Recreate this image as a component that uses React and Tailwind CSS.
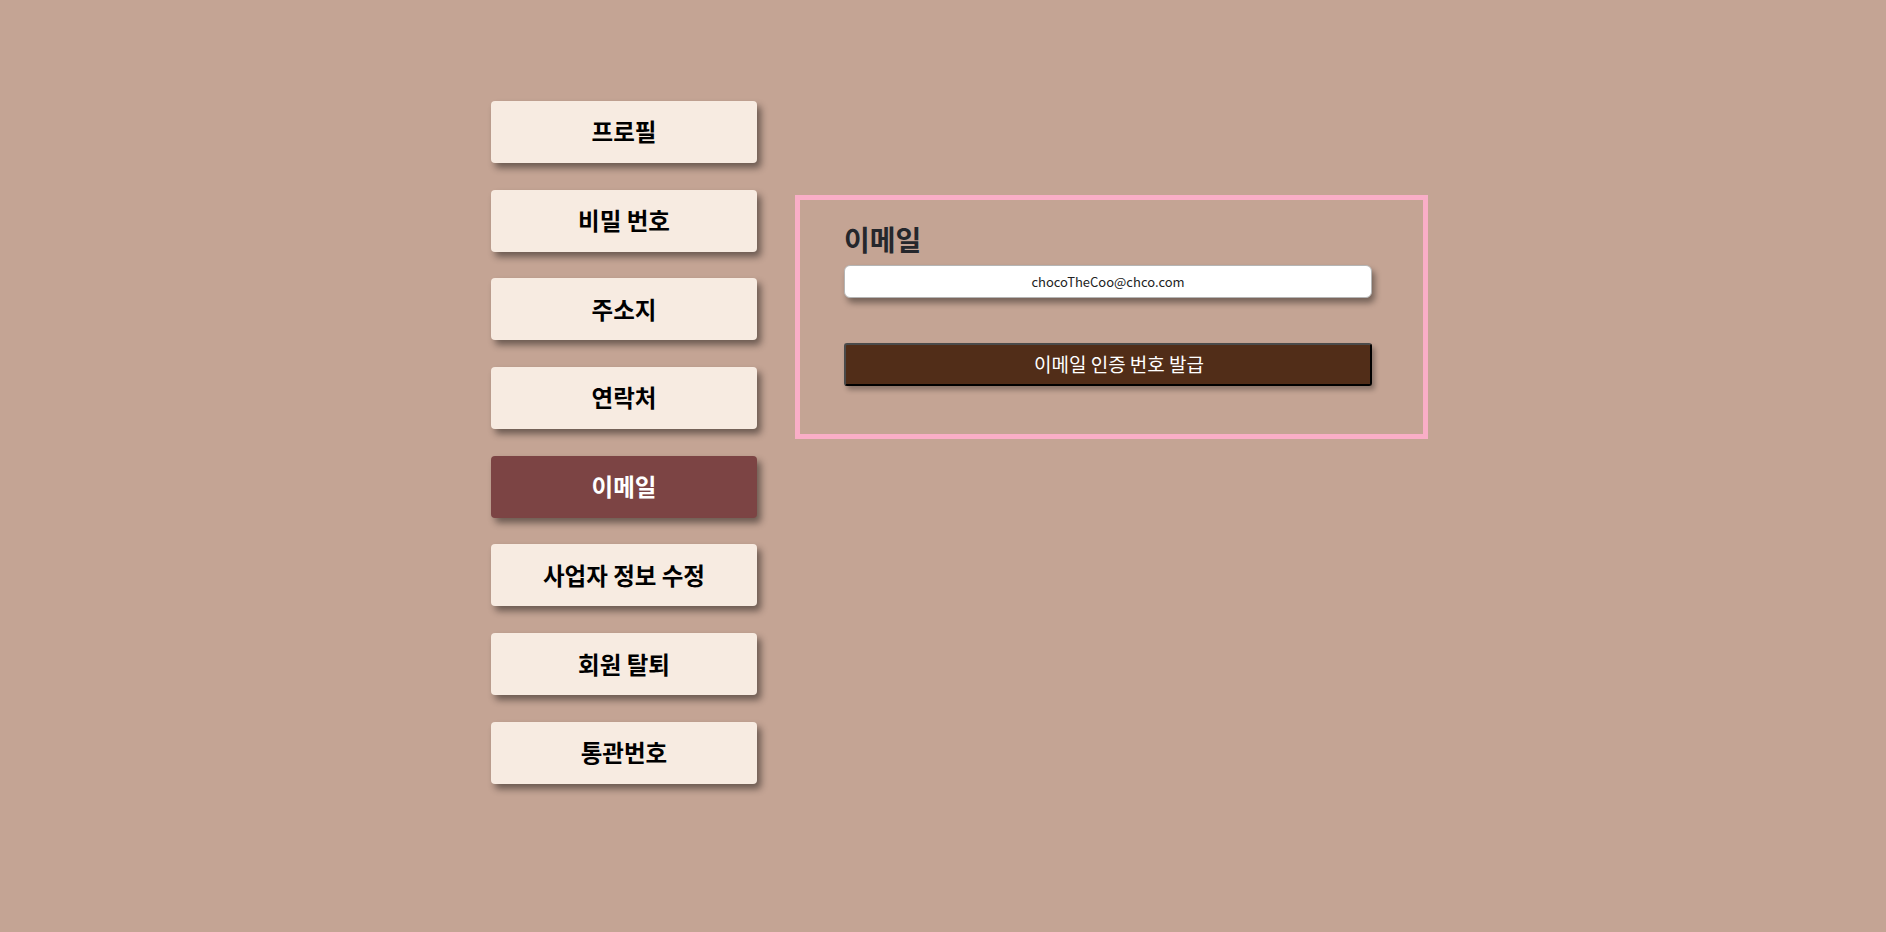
export default function App() {
  const items = ["프로필", "비밀 번호", "주소지", "연락처", "이메일", "사업자 정보 수정", "회원 탈퇴", "통관번호"];
  const font = { fontFamily: '"Noto Sans CJK KR", "Noto Sans", sans-serif' };
  return (
    <div className="min-h-[932px] w-full bg-[#c4a494]" style={font}>
      <div className="flex items-start pl-[491px] pt-[101px]">
        <div className="flex w-[266px] flex-col gap-[26.7px]">
          {items.map((t) => (
            <button
              key={t}
              className={
                t === "이메일"
                  ? "flex h-[62px] w-full items-center justify-center rounded-[4px] bg-[#7c4444] text-[23.5px] font-bold text-white shadow-[4px_5px_7px_rgba(0,0,0,0.45)]"
                  : "flex h-[62px] w-full items-center justify-center rounded-[4px] bg-[#f7ebe1] text-[23.5px] font-bold text-black shadow-[4px_5px_7px_rgba(0,0,0,0.45)]"
              }
            >
              {t}
            </button>
          ))}
        </div>
        <div className="ml-[38px] mt-[94px] h-[244px] w-[633px] border-[5px] border-[#f9aec7] pl-[44px] pr-[50px] pt-[19px]">
          <h2 className="text-[28px] font-bold leading-[40px] text-[#25272c]">이메일</h2>
          <div className="mt-[6px] flex h-[33px] w-[528px] items-center justify-center rounded-[6px] border border-[#b5b5b5] bg-white text-[13px] text-[#222] shadow-[3px_5px_6px_rgba(0,0,0,0.4)]">
            chocoTheCoo@chco.com
          </div>
          <button className="mt-[45px] flex h-[43px] w-[528px] items-center justify-center rounded-[3px] border-2 border-b-black border-l-[#4a4a4a] border-r-black border-t-[#4a4a4a] bg-[#512d18] pl-[22px] text-[19px] text-white shadow-[3px_4px_5px_rgba(0,0,0,0.3)]">
            이메일 인증 번호 발급
          </button>
        </div>
      </div>
    </div>
  );
}
